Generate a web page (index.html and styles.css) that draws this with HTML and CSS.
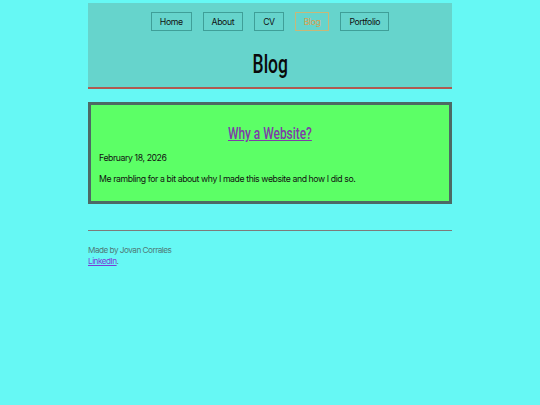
FILE: index.html
```html
<!DOCTYPE html>
<html lang="en">
<head>
<meta charset="utf-8">
<title>Blog</title>
<link rel="stylesheet" href="styles.css">
</head>
<body>
<div class="page">
  <header class="site-header">
    <nav class="nav">
      <a class="nav-btn" href="#">Home</a>
      <a class="nav-btn" href="#">About</a>
      <a class="nav-btn" href="#">CV</a>
      <a class="nav-btn active" href="#">Blog</a>
      <a class="nav-btn" href="#">Portfolio</a>
    </nav>
    <h1 class="page-title"><span class="narrow">Blog</span></h1>
  </header>
  <main class="content">
    <article class="post-card">
      <h2 class="post-title"><a class="narrow" href="#">Why a Website?</a></h2>
      <p class="post-date">February 18, 2026</p>
      <p class="post-summary">Me rambling for a bit about why I made this website and how I did so.</p>
    </article>
  </main>
  <footer class="site-footer">
    <p class="credit">Made by Jovan Corrales</p>
    <p class="links"><a href="#">LinkedIn</a>.</p>
  </footer>
</div>
</body>
</html>
```
FILE: styles.css
```css
html, body {
  margin: 0;
  padding: 0;
  background: #66f8f4;
}
body {
  font-family: Inter, "Noto Sans", sans-serif;
  color: #111;
}
.page {
  width: 364px;
  margin: 0 auto;
  padding-top: 3px;
}
.site-header {
  background: #66d4cc;
  border-bottom: 2px solid #b05a50;
  padding-top: 9px;
  height: 75px;
  box-sizing: content-box;
}
.nav {
  display: flex;
  justify-content: center;
  gap: 11px;
}
.nav-btn {
  display: block;
  height: 19px;
  line-height: 18px;
  box-sizing: border-box;
  padding: 0 8px;
  border: 1px solid #3f9f98;
  font-size: 8.7px;
  letter-spacing: -0.4px;
  color: #111;
  text-decoration: none;
}
.nav-btn.active {
  color: #d9a050;
  border-color: #c8b878;
}
.narrow {
  display: inline-block;
  transform: scaleX(0.7);
  transform-origin: center;
}
.page-title {
  margin: 21px 0 0;
  text-align: center;
  font-family: Roboto, sans-serif;
  font-weight: 500;
  font-size: 25px;
  line-height: 26px;
  color: #0a0a0a;
}
.content {
  padding-top: 13px;
}
.post-card {
  background: #5cff66;
  border: 3px solid #4c6a64;
  padding: 18px 8px 15px;
}
.post-title {
  margin: 0;
  text-align: center;
  font-family: Roboto, sans-serif;
  font-weight: 500;
  font-size: 17px;
  line-height: 20px;
}
.post-title a {
  color: #7e3ca8;
  text-decoration: underline;
}
.post-date {
  margin: 8px 0 0;
  font-size: 8.7px;
  letter-spacing: -0.4px;
  line-height: 14px;
}
.post-summary {
  margin: 7px 0 0;
  font-size: 8.7px;
  letter-spacing: -0.4px;
  line-height: 14px;
}
.site-footer {
  margin-top: 26px;
  border-top: 1px solid #7d7b7a;
  padding-top: 14px;
}
.credit, .links {
  margin: 0;
  font-size: 8.2px;
  letter-spacing: -0.5px;
  line-height: 11px;
  color: #4f7a78;
}
.links a {
  color: #7a3cd8;
}
```
